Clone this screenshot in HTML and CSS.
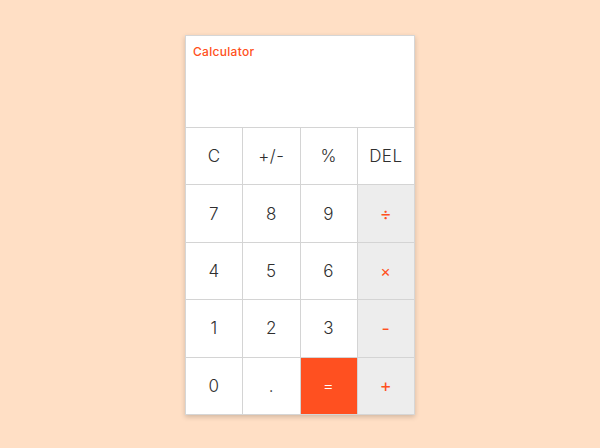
FILE: index.html
```html
<!DOCTYPE html>
<html>
<head>
<meta charset="utf-8">
<link rel="stylesheet" href="styles.css">
</head>
<body>
<div class="calc">
  <div class="display"><span class="title">Calculator</span></div>
  <div class="keys">
    <div class="key">C</div>
    <div class="key">+/-</div>
    <div class="key">%</div>
    <div class="key">DEL</div>
    <div class="key">7</div>
    <div class="key">8</div>
    <div class="key">9</div>
    <div class="key op">÷</div>
    <div class="key">4</div>
    <div class="key">5</div>
    <div class="key">6</div>
    <div class="key op small">×</div>
    <div class="key">1</div>
    <div class="key">2</div>
    <div class="key">3</div>
    <div class="key op">-</div>
    <div class="key">0</div>
    <div class="key">.</div>
    <div class="key eq">=</div>
    <div class="key op">+</div>
  </div>
</div>
</body>
</html>
```
FILE: styles.css
```css
html, body {
  margin: 0;
  padding: 0;
  height: 100%;
}
body {
  background: #ffdfc5;
  display: flex;
  align-items: center;
  justify-content: center;
  font-family: "Inter", "DejaVu Sans", sans-serif;
}
.calc {
  width: 228px;
  margin-top: 2px;
  border: 1px solid #d6d6d6;
  background: #ffffff;
  box-shadow: 0 2px 5px rgba(0, 0, 0, 0.18);
}
.display {
  height: 91px;
  padding: 7px 7px;
  box-sizing: border-box;
  line-height: 14px;
}
.title {
  color: #ff5020;
  font-size: 12px;
  font-weight: 500;
  letter-spacing: 0.3px;
}
.keys {
  display: grid;
  grid-template-columns: repeat(4, 1fr);
  grid-auto-rows: 56.4px;
  gap: 1px;
  padding-top: 1px;
  background: #d4d4d4;
}
.key {
  background: #ffffff;
  display: flex;
  align-items: center;
  justify-content: center;
  font-size: 17px;
  font-weight: 300;
  color: #2f2f2f;
  letter-spacing: 0.5px;
}
.op {
  background: #ededed;
  color: #ff5020;
  font-weight: 400;
  font-size: 18px;
}
.small {
  font-size: 16px;
}
.eq {
  background: #ff5020;
  color: #ffffff;
}
```
